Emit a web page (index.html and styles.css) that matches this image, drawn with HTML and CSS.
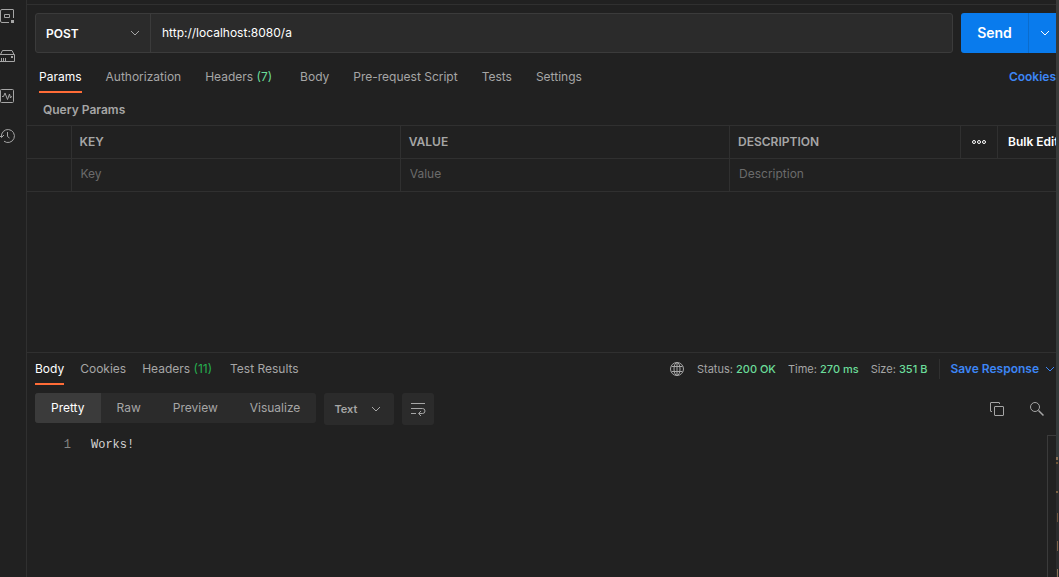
FILE: index.html
```html
<!DOCTYPE html>
<html lang="en">
<head>
    <meta charset="UTF-8">
    <meta name="viewport" content="width=device-width, initial-scale=1.0">
    <title>API Client</title>
    <link rel="stylesheet" href="styles.css">
</head>
<body>
    <div class="app">
        <!-- Left icon rail -->
        <nav class="rail" aria-label="Sidebar">
            <button class="icon-button" aria-label="Environments">
                <svg width="16" height="16" viewBox="0 0 16 16" fill="none" stroke="currentColor">
                    <path d="M9 14.500H2a1.500 1.500 0 0 1-1.500-1.500V3A1.500 1.500 0 0 1 2 1.500h11A.5.5 0 0 1 13.500 2v8" />
                    <path d="M4.500 6.500h5v3h-5z" />
                    <path d="M11 12h3v3h-3z" fill="currentColor" stroke="none" />
                </svg>
            </button>
            <button class="icon-button" aria-label="Mock servers">
                <svg width="16" height="16" viewBox="0 0 16 16" fill="none" stroke="currentColor">
                    <path d="M-.5 6.500h15v7h-15M.5 6.500l2-4h9.500l2 4M1.500 10v3M3.500 10v3M5.500 10v3" />
                    <path d="M11 8h2v2h-2z" fill="currentColor" stroke="none" />
                </svg>
            </button>
            <button class="icon-button" aria-label="Monitors">
                <svg width="16" height="16" viewBox="0 0 16 16" fill="none" stroke="currentColor">
                    <rect x="0.500" y="1.500" width="13" height="13" rx="1" />
                    <path d="M2 8.500h1.500L5 5l2.500 6.500L9.500 6l1 4 1-1.500H12" />
                </svg>
            </button>
            <button class="icon-button" aria-label="History">
                <svg width="16" height="16" viewBox="0 0 16 16" fill="none" stroke="currentColor">
                    <path d="M1.500 9A6.500 6.500 0 1 1 4 13.200M-1 7l2.500 2.500L4 7M7.500 4v4.500l2 1.500" />
                </svg>
            </button>
        </nav>

        <main class="workspace">
            <!-- Request -->
            <section class="request">
                <form class="url-bar">
                    <div class="url-box">
                        <div class="select-wrap method">
                            <select aria-label="Method">
                                <option>POST</option>
                            </select>
                            <svg class="chevron" width="10" height="6" viewBox="0 0 10 6" fill="none" stroke="currentColor"><path d="M1 1l4 4 4-4" /></svg>
                        </div>
                        <input class="url" type="text" aria-label="Request URL" value="http://localhost:8080/a">
                    </div>
                    <div class="send-group">
                        <button class="send" type="button">Send</button>
                        <button class="send-more" type="button" aria-label="Send options">
                            <svg width="10" height="6" viewBox="0 0 10 6" fill="none" stroke="currentColor"><path d="M1 1l4 4 4-4" /></svg>
                        </button>
                    </div>
                </form>

                <div class="tabs request-tabs">
                    <button class="tab active">Params</button>
                    <button class="tab">Authorization</button>
                    <button class="tab">Headers <span class="count">(7)</span></button>
                    <button class="tab">Body</button>
                    <button class="tab">Pre-request Script</button>
                    <button class="tab">Tests</button>
                    <button class="tab">Settings</button>
                    <a class="link cookies" href="#">Cookies</a>
                </div>

                <h2 class="section-title">Query Params</h2>
                <table class="params">
                    <thead>
                        <tr>
                            <th class="check"></th>
                            <th class="field">KEY</th>
                            <th class="field">VALUE</th>
                            <th>
                                <div class="description-head">
                                    <span class="description-label">DESCRIPTION</span>
                                    <button class="more" aria-label="Column options">
                                        <svg width="16" height="6" viewBox="0 0 16 6" fill="none" stroke="currentColor">
                                            <circle cx="3" cy="3" r="1.500" /><circle cx="8" cy="3" r="1.500" /><circle cx="13" cy="3" r="1.500" />
                                        </svg>
                                    </button>
                                    <button class="bulk">Bulk Edit</button>
                                </div>
                            </th>
                        </tr>
                    </thead>
                    <tbody>
                        <tr>
                            <td class="check"></td>
                            <td><input type="text" aria-label="Key" placeholder="Key"></td>
                            <td><input type="text" aria-label="Value" placeholder="Value"></td>
                            <td><input type="text" aria-label="Description" placeholder="Description"></td>
                        </tr>
                    </tbody>
                </table>
            </section>

            <!-- Response -->
            <section class="response">
                <div class="response-head">
                    <div class="tabs response-tabs">
                        <button class="tab active">Body</button>
                        <button class="tab">Cookies</button>
                        <button class="tab">Headers <span class="count dark">(11)</span></button>
                        <button class="tab">Test Results</button>
                    </div>
                    <div class="meta">
                        <svg class="globe" width="16" height="16" viewBox="0 0 16 16" fill="none" stroke="currentColor">
                            <circle cx="8" cy="8" r="6.500" />
                            <ellipse cx="8" cy="8" rx="3" ry="6.500" />
                            <path d="M8 1.500v13M2.500 5.500h11M2.500 10.500h11" />
                        </svg>
                        <span>Status: <b>200 OK</b></span>
                        <span>Time: <b>270 ms</b></span>
                        <span>Size: <b>351 B</b></span>
                    </div>
                    <button class="link save">
                        Save Response
                        <svg width="10" height="6" viewBox="0 0 10 6" fill="none" stroke="currentColor"><path d="M1 1l4 4 4-4" /></svg>
                    </button>
                </div>

                <div class="toolbar">
                    <div class="views">
                        <button class="view active">Pretty</button>
                        <button class="view">Raw</button>
                        <button class="view">Preview</button>
                        <button class="view">Visualize</button>
                    </div>
                    <div class="select-wrap format">
                        <select aria-label="Format">
                            <option>Text</option>
                        </select>
                        <svg class="chevron" width="10" height="6" viewBox="0 0 10 6" fill="none" stroke="currentColor"><path d="M1 1l4 4 4-4" /></svg>
                    </div>
                    <button class="wrap-button" aria-label="Wrap lines">
                        <svg width="16" height="16" viewBox="0 0 16 16" fill="none" stroke="currentColor">
                            <path d="M1 2.500h14M1 7.500h11.500a2.500 2.500 0 0 1 0 5H9M1 12.500h5M11 10l-2.500 2.500L11 15" />
                        </svg>
                    </button>
                    <div class="tools">
                        <button class="icon-button" aria-label="Copy">
                            <svg width="16" height="16" viewBox="0 0 16 16" fill="none" stroke="currentColor">
                                <rect x="5.500" y="5.500" width="9" height="9" rx="0.500" />
                                <path d="M3 10.500H2a.5.5 0 0 1-.5-.5V2a.5.5 0 0 1 .5-.5h8a.5.5 0 0 1 .5.5v1" />
                            </svg>
                        </button>
                        <button class="icon-button" aria-label="Search">
                            <svg width="16" height="16" viewBox="0 0 16 16" fill="none" stroke="currentColor">
                                <circle cx="6" cy="6" r="4.500" />
                                <path d="M9.500 9.500l5 5" stroke-width="1.500" />
                            </svg>
                        </button>
                    </div>
                </div>

                <div class="editor">
                    <span class="line-number">1</span>
                    <code>Works!</code>
                    <div class="minimap"></div>
                </div>
            </section>
        </main>
        <div class="edge"></div>
    </div>
</body>
</html>
```
FILE: styles.css
```css
* {
    box-sizing: border-box;
}
body {
    margin: 0;
    background-color: #212121;
    color: #a6a6a6;
    font-family: Inter, sans-serif;
    font-size: 12px;
    line-height: 16px;
}
button, input, select {
    margin: 0;
    padding: 0;
    border: none;
    border-radius: 0;
    background: none;
    color: inherit;
    font: inherit;
    appearance: none;
}
button {
    cursor: pointer;
}
svg {
    display: block;
    flex: none;
}
.app {
    display: flex;
    min-height: 100vh;
}
.rail {
    display: flex;
    flex-direction: column;
    gap: 24px;
    width: 27px;
    flex: none;
    padding-top: 8px;
    border-right: 1px solid #303030;
}
.icon-button {
    width: 16px;
    height: 16px;
}
.workspace {
    display: flex;
    flex: 1;
    flex-direction: column;
    min-width: 0;
    padding-top: 4px;
    overflow: hidden;
}

/* Sliver of the window behind */
.edge {
    width: 3px;
    flex: none;
    background-color: #353738;
    background-image:
        linear-gradient(#8a7358, #8a7358),
        linear-gradient(#6e5638, #6e5638),
        linear-gradient(#7a6244, #7a6244),
        linear-gradient(#6e543c, #6e543c),
        linear-gradient(#7d6248, #7d6248),
        linear-gradient(#8a7358, #8a7358),
        linear-gradient(#3a3a39 0%, #343a3a 70%, #343a3b 79%, #2b2c2d 80%);
    background-position: 0 457px, 0 462px, 0 491px, 1px 513px, 1px 541px, 1px 569px, 0 0;
    background-size: 2px 3px, 2px 2px, 2px 2px, 1px 9px, 1px 10px, 1px 8px, 3px 100%;
    background-repeat: no-repeat;
}

/* Request */
.request {
    flex: 53 0 0;
    padding-top: 8px;
    border-top: 1px solid #303030;
}
.url-bar {
    display: flex;
    gap: 8px;
    padding-left: 8px;
}
.url-box {
    display: flex;
    flex: 1;
    height: 40px;
    border: 1px solid #3b3b3b;
    border-radius: 3px;
    background-color: #2b2b2b;
}
.select-wrap {
    display: grid;
    align-items: center;
}
.select-wrap select,
.select-wrap .chevron {
    grid-area: 1 / 1;
}
.chevron {
    justify-self: end;
    pointer-events: none;
}
.method {
    width: 115px;
    border-right: 1px solid #3b3b3b;
}
.method select {
    height: 38px;
    padding: 1px 0 0 10px;
    color: #fff;
    font-weight: 600;
}
.method .chevron {
    margin-right: 10px;
}
.url {
    flex: 1;
    padding-left: 11px;
    color: #fff;
}
.send-group {
    display: flex;
    width: 95px;
    height: 40px;
    border-radius: 3px 0 0 3px;
    background-color: #097bed;
    color: #fff;
}
.send {
    width: 67px;
    font-size: 14px;
    font-weight: 600;
}
.send-more {
    display: flex;
    flex: 1;
    align-items: center;
    padding-left: 11px;
    border-left: 1px solid #0a6ccd;
}
.tabs {
    display: flex;
    align-items: flex-end;
    white-space: nowrap;
}
.tab {
    height: 32px;
    padding-top: 2px;
    border-bottom: 2px solid transparent;
}
.tab.active {
    border-color: #ff6c37;
    color: #fff;
}
.count {
    margin-right: 4px;
    color: #6bdd9a;
}
.count.dark {
    margin-right: 2px;
    color: #26b04f;
}
.link {
    color: #3d86f5;
    font-weight: 600;
    text-decoration: none;
}
.request-tabs {
    gap: 24px;
    height: 40px;
    padding-left: 12px;
}
.cookies {
    margin-left: auto;
    padding-bottom: 8px;
}
.section-title {
    margin: 0;
    padding: 9px 16px 7px;
    font-size: 12px;
    font-weight: 600;
    line-height: 16px;
}
.params {
    width: 100%;
    border-collapse: collapse;
    table-layout: fixed;
}
.params th,
.params td {
    height: 33px;
    padding: 0 0 0 8px;
    border: 1px solid #303030;
    border-right: none;
    text-align: left;
}
.params td {
    padding-bottom: 2px;
}
.params .check {
    width: 44px;
    border-left: none;
}
.params .field {
    width: 32%;
}
.params th {
    font-weight: 600;
}
.params input {
    width: 100%;
    padding-left: 1px;
}
.params input::placeholder {
    color: #6b6b6b;
}
.description-head {
    display: flex;
    align-items: center;
    white-space: nowrap;
}
.description-label {
    flex: 1;
}
.more {
    display: flex;
    align-items: center;
    justify-content: center;
    width: 37px;
    height: 32px;
    border-left: 1px solid #303030;
    color: #fff;
}
.bulk {
    width: 59px;
    height: 32px;
    padding-left: 10px;
    border-left: 1px solid #303030;
    color: #fff;
    font-weight: 600;
    text-align: left;
}

/* Response */
.response {
    display: flex;
    flex: 35 0 0;
    flex-direction: column;
    border-top: 1px solid #303030;
}
.response-head {
    display: flex;
    align-items: center;
    height: 32px;
    white-space: nowrap;
}
.response-tabs {
    gap: 16px;
    padding-left: 8px;
}
.meta {
    display: flex;
    align-items: center;
    gap: 12px;
    margin-left: auto;
    font-size: 11px;
}
.meta b {
    color: #6bdd9a;
    font-weight: 500;
}
.save {
    display: flex;
    align-items: center;
    gap: 6px;
    height: 20px;
    margin-left: 12px;
    padding: 0 1px 0 10px;
    border-left: 1px solid #303030;
}
.toolbar {
    display: flex;
    gap: 8px;
    padding: 8px 11px 0 8px;
}
.views {
    display: flex;
    height: 30px;
    overflow: hidden;
    border-radius: 3px;
    background-color: #2b2b2b;
}
.view {
    padding: 0 16px;
}
.view.active {
    background-color: #3b3b3b;
    color: #fff;
}
.format {
    width: 70px;
    border-radius: 3px;
    background-color: #2b2b2b;
    font-size: 11px;
    font-weight: 600;
}
.format select {
    height: 32px;
    padding-left: 10px;
}
.format .chevron {
    margin-right: 13px;
}
.wrap-button {
    display: flex;
    align-items: center;
    justify-content: center;
    width: 32px;
    height: 32px;
    border-radius: 3px;
    background-color: #2b2b2b;
}
.tools {
    display: flex;
    align-items: center;
    gap: 24px;
    margin-left: auto;
}
.editor {
    display: flex;
    flex: 1;
    padding-top: 10px;
    font-family: "Liberation Mono", monospace;
    font-size: 12px;
    line-height: 20px;
}
.line-number {
    width: 44px;
    color: #858585;
    text-align: right;
}
.editor code {
    margin-left: 20px;
    color: #d4d4d4;
    font-family: inherit;
}
.minimap {
    width: 9px;
    margin-left: auto;
    border-top: 1px solid #3b3b3b;
    border-left: 1px solid #3b3b3b;
}
```
